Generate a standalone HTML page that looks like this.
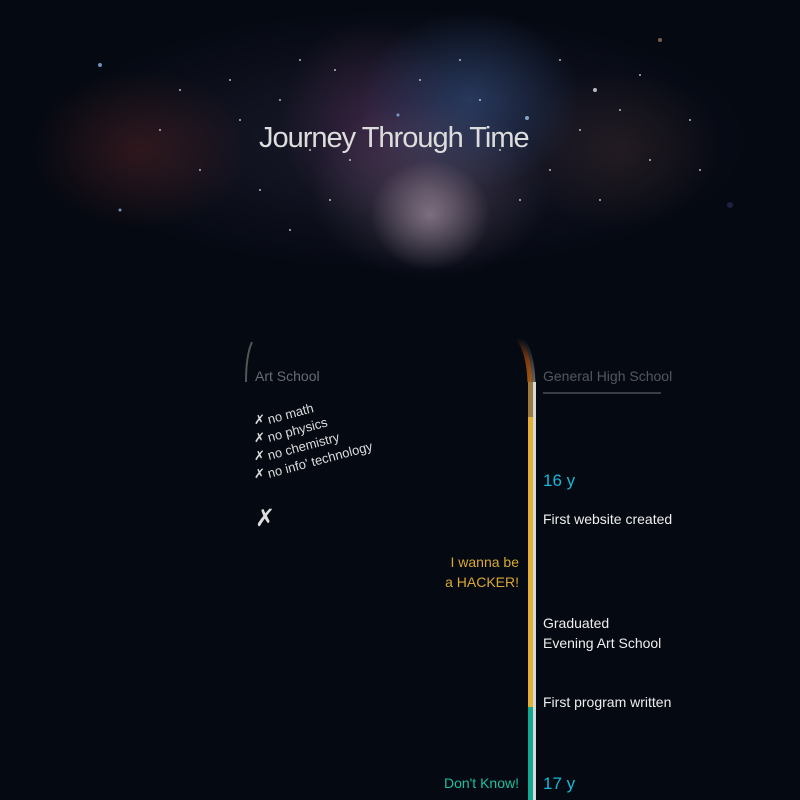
<!DOCTYPE html>
<html><head><meta charset="utf-8"><style>
*{margin:0;padding:0}
html,body{width:800px;height:800px;overflow:hidden;background:#050912;font-family:"Liberation Sans",sans-serif}
.hero{position:absolute;left:0;top:0;width:800px;height:300px;
background:
radial-gradient(ellipse 60px 55px at 430px 215px,rgba(220,195,210,.45),transparent),
radial-gradient(ellipse 120px 90px at 430px 190px,rgba(160,130,165,.3),transparent),
radial-gradient(ellipse 110px 90px at 470px 100px,rgba(70,110,180,.4),transparent),
radial-gradient(ellipse 90px 100px at 370px 120px,rgba(110,55,105,.35),transparent),
radial-gradient(ellipse 110px 80px at 140px 150px,rgba(130,45,40,.3),transparent),
radial-gradient(ellipse 100px 80px at 620px 150px,rgba(90,55,50,.28),transparent),
radial-gradient(ellipse 350px 130px at 400px 140px,rgba(45,42,65,.55),transparent);}
.t{position:absolute;color:#fff;font-size:14px;white-space:nowrap}
.li{position:absolute;left:254px;color:#ddd;font-size:13px;white-space:nowrap}
.li span{display:inline-block;transform-origin:0 80%;transform:rotate(-15deg);margin-left:4px}
</style></head><body>
<div class="hero"></div>
<svg width="800" height="300" style="position:absolute;left:0;top:0">
<g fill="#fff" opacity=".7">
<circle cx="100" cy="65" r="2" fill="#9cf"/><circle cx="398" cy="115" r="1.5" fill="#9cf"/><circle cx="527" cy="118" r="2" fill="#adf"/>
<circle cx="595" cy="90" r="2"/><circle cx="240" cy="120" r="1"/><circle cx="280" cy="100" r="1"/><circle cx="310" cy="150" r="1"/>
<circle cx="335" cy="70" r="1"/><circle cx="350" cy="160" r="1"/><circle cx="460" cy="60" r="1"/><circle cx="500" cy="150" r="1"/>
<circle cx="550" cy="170" r="1"/><circle cx="580" cy="130" r="1"/><circle cx="620" cy="110" r="1"/><circle cx="650" cy="160" r="1"/>
<circle cx="200" cy="170" r="1"/><circle cx="180" cy="90" r="1"/><circle cx="260" cy="190" r="1"/><circle cx="300" cy="60" r="1"/>
<circle cx="420" cy="80" r="1"/><circle cx="480" cy="100" r="1"/><circle cx="560" cy="60" r="1"/><circle cx="700" cy="170" r="1"/>
<circle cx="230" cy="80" r="1"/><circle cx="330" cy="200" r="1"/><circle cx="290" cy="230" r="1"/><circle cx="600" cy="200" r="1"/>
<circle cx="640" cy="75" r="1"/><circle cx="520" cy="200" r="1"/><circle cx="160" cy="130" r="1"/><circle cx="690" cy="120" r="1"/>
<circle cx="120" cy="210" r="1.5" fill="#9cf"/><circle cx="730" cy="205" r="3" fill="#336" opacity=".8"/><circle cx="660" cy="40" r="2" fill="#a86"/>
</g></svg>
<div class="t" style="left:259px;top:122px;font-size:29px;color:#ddd;letter-spacing:-1px">Journey Through Time</div>

<svg width="800" height="800" style="position:absolute;left:0;top:0">
<defs>
<linearGradient id="g1" x1="0" y1="0" x2="0" y2="1"><stop offset="0" stop-color="#050912"/><stop offset=".5" stop-color="#7a3a12"/><stop offset="1" stop-color="#a05a14"/></linearGradient>
<linearGradient id="g2" x1="0" y1="0" x2="0" y2="1"><stop offset="0" stop-color="#050912"/><stop offset="1" stop-color="#666"/></linearGradient>
</defs>
<path d="M518 338 Q529 352 530 382" stroke="url(#g1)" stroke-width="5" fill="none"/>
<path d="M522 338 Q533 352 534 382" stroke="url(#g2)" stroke-width="3" fill="none"/>
<rect x="528" y="382" width="5" height="35" fill="#9a7a40"/>
<rect x="528" y="417" width="5" height="290" fill="#e2b034"/>
<rect x="528" y="707" width="5" height="93" fill="#13a892"/>
<rect x="533" y="382" width="3" height="418" fill="#d8d8d8"/>
<path d="M252 342 Q246 355 246 382" stroke="#555" stroke-width="2" fill="none"/>
<rect x="543" y="392" width="118" height="2" fill="#3a3d45"/>
</svg>

<div class="t" style="left:255px;top:368px;color:#6a6c72">Art School</div>
<div class="t" style="left:543px;top:368px;color:#55575e">General High School</div>

<div class="li" style="top:412px">✗<span>no math</span></div>
<div class="li" style="top:430px">✗<span>no physics</span></div>
<div class="li" style="top:448px">✗<span>no chemistry</span></div>
<div class="li" style="top:466px">✗<span>no info' technology</span></div>
<div class="t" style="left:255px;top:504px;color:#ddd;font-size:24px">✗</div>

<div class="t" style="left:543px;top:471px;color:#19b6d6;font-size:17px">16 y</div>
<div class="t" style="left:543px;top:511px;color:#eee">First website created</div>
<div class="t" style="left:420px;width:99px;text-align:right;top:552px;color:#d9a732;line-height:20px">I wanna be<br>a HACKER!</div>
<div class="t" style="left:543px;top:613px;color:#eee;line-height:20px">Graduated<br>Evening Art School</div>
<div class="t" style="left:543px;top:694px;color:#eee">First program written</div>
<div class="t" style="left:420px;width:99px;text-align:right;top:775px;color:#19c0a2">Don't Know!</div>
<div class="t" style="left:543px;top:774px;color:#19b6d6;font-size:17px">17 y</div>
</body></html>
